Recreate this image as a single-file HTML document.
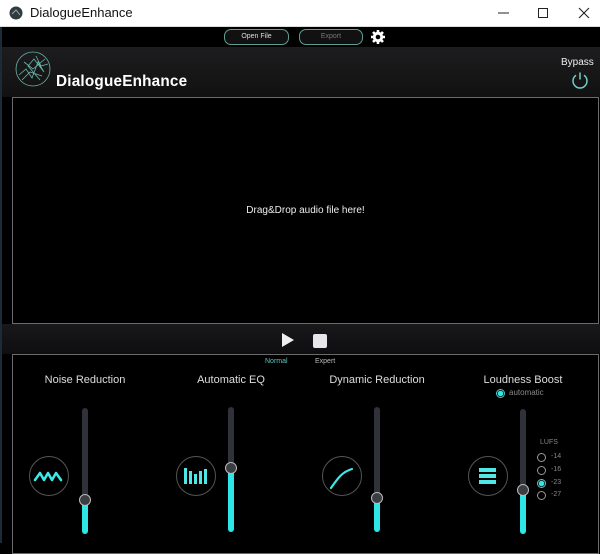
<!DOCTYPE html>
<html><head><meta charset="utf-8"><style>
*{margin:0;padding:0;box-sizing:border-box}
body{width:600px;height:543px;overflow:hidden;background:#000;font-family:"Liberation Sans",sans-serif;position:relative}
.abs{position:absolute}
#title{left:0;top:0;width:600px;height:27px;background:#fff;border-bottom:1px solid #ddd}
#title span{position:absolute;left:30px;top:5px;font-size:13px;color:#111}
#frame{left:0;top:27px;width:600px;height:516px;background:#000;border-left:2px solid #1c2a3a}
#hdr{left:2px;top:47px;width:598px;height:50px;background:linear-gradient(#1d1d1f,#111)}
.btn{position:absolute;top:29px;height:16px;border:1.5px solid #5e9e95;border-radius:7px;font-size:7px;text-align:center;line-height:13px;background:#111}
#drop{left:12px;top:97px;width:587px;height:227px;border:1px solid #6a6a6a;background:#000;color:#eee;font-size:10px;text-align:center;line-height:226px}
#trans{left:2px;top:324px;width:598px;height:30px;background:linear-gradient(#18181a,#0e0e10)}
#panel{left:12px;top:354px;width:587px;height:200px;border:1px solid #6a6a6a;background:#000}
.lab{position:absolute;color:#ddd;font-size:11px;text-align:center;width:140px}
.track{position:absolute;width:6px;border-radius:3px;background:#2f3238}
.fill{position:absolute;width:6px;border-radius:3px;background:#2ee6e6;bottom:0;left:0}
.knob{position:absolute;width:12px;height:12px;border-radius:50%;background:#3a3d42;border:1.5px solid #bbb;left:-3px}
.ic{position:absolute;width:40px;height:40px;border-radius:50%;border:1px solid #555}
.rad{position:absolute;width:9px;height:9px;border-radius:50%;border:1px solid #999}
.rl{position:absolute;font-size:7px;color:#888}
</style></head><body>
<div id="title" class="abs">
<svg class="abs" style="left:9px;top:6px" width="14" height="14"><circle cx="7" cy="7" r="6.5" fill="#2f3b3d"/><path d="M3 8 L7 4 L11 9" stroke="#9ab" fill="none" stroke-width="1"/></svg>
<span>DialogueEnhance</span>
<svg class="abs" style="left:490px;top:6px" width="104" height="14"><path d="M8 7h11" stroke="#222" stroke-width="1"/><rect x="48.5" y="2.5" width="9" height="9" fill="none" stroke="#222"/><path d="M89 2l10 10M99 2l-10 10" stroke="#222" stroke-width="1.1"/></svg>
</div>
<div id="frame" class="abs"></div>
<div class="btn" style="left:224px;width:65px;color:#ddd">Open File</div>
<div class="btn" style="left:299px;width:64px;color:#777">Export</div>
<svg class="abs" style="left:370px;top:29px" width="16" height="16" viewBox="0 0 16 16"><g fill="#fff"><circle cx="8" cy="8" r="5.2"/><g stroke="#fff" stroke-width="2.6"><path d="M8 1v14M1 8h14M3 3l10 10M13 3L3 13"/></g></g><circle cx="8" cy="8" r="2.3" fill="#000"/></svg>
<div id="hdr" class="abs"></div>
<svg class="abs" style="left:14px;top:50px" width="38" height="38" viewBox="0 0 38 38" fill="none" stroke="#6bb5ab" stroke-width="0.8"><circle cx="19" cy="19" r="17"/><path d="M5 25 L12 19 L18 28 L24 12 L30 22 L20 9 L14 16 L26 30 M8 30 L16 22 L28 26 M22 6 L27 16 L34 14 M10 12 L19 19 L31 9"/></svg>
<div class="abs" style="left:56px;top:73px;color:#fff;font-size:15.3px;font-weight:bold;letter-spacing:0.2px">DialogueEnhance</div>
<div class="abs" style="left:561px;top:57px;color:#eee;font-size:10px">Bypass</div>
<svg class="abs" style="left:570px;top:70px" width="20" height="20" viewBox="0 0 20 20" fill="none" stroke="#6ed0c6" stroke-width="1.5"><path d="M6 5.2A7 7 0 1 0 14 5.2"/><path d="M10 2.5v7"/></svg>
<div id="drop" class="abs">Drag&amp;Drop audio file here!</div>
<div id="trans" class="abs"></div>
<svg class="abs" style="left:281px;top:332px" width="14" height="16"><path d="M1 1L13 8L1 15Z" fill="#eee"/></svg>
<div class="abs" style="left:313px;top:334px;width:14px;height:14px;background:#e6e6ea;border-radius:2px"></div>
<div id="panel" class="abs"></div>
<div class="abs" style="left:265px;top:358px;font-size:7px;color:#5ec8c0">Normal</div>
<div class="abs" style="left:315px;top:358px;font-size:7px;color:#bbb">Expert</div>
<div class="lab" style="left:15px;top:374px">Noise Reduction</div>
<div class="lab" style="left:161px;top:374px">Automatic EQ</div>
<div class="lab" style="left:307px;top:374px">Dynamic Reduction</div>
<div class="lab" style="left:453px;top:374px">Loudness Boost</div>
<div class="rad" style="left:496px;top:389px;border-color:#5ec8c0;background:radial-gradient(#2ee6e6 2.5px,#000 3px)"></div>
<div class="abs" style="left:509px;top:388px;font-size:8px;color:#888">automatic</div>
<div class="track" style="left:82px;top:408px;height:126px"><div class="fill" style="height:34px"></div><div class="knob" style="top:86px"></div></div>
<div class="track" style="left:228px;top:407px;height:125px"><div class="fill" style="height:64px"></div><div class="knob" style="top:55px"></div></div>
<div class="track" style="left:374px;top:407px;height:125px"><div class="fill" style="height:33px"></div><div class="knob" style="top:85px"></div></div>
<div class="track" style="left:520px;top:409px;height:125px"><div class="fill" style="height:44px"></div><div class="knob" style="top:75px"></div></div>
<div class="ic" style="left:29px;top:456px"></div>
<svg class="abs" style="left:33px;top:466px" width="32" height="20" viewBox="0 0 32 20" fill="none" stroke="#3ee8e8" stroke-width="2.5" stroke-linecap="round" stroke-linejoin="round"><path d="M2 14 L7 7 L11 14 L15 7 L19 14 L23 7 L28 14"/></svg>
<div class="ic" style="left:176px;top:456px"></div>
<svg class="abs" style="left:184px;top:466px" width="24" height="20" fill="#4ee6e6"><rect x="0" y="2" width="3" height="16"/><rect x="5" y="5" width="3" height="13"/><rect x="10" y="8" width="3" height="10"/><rect x="15" y="5" width="3" height="13"/><rect x="20" y="3" width="3" height="15"/></svg>
<div class="ic" style="left:322px;top:456px"></div>
<svg class="abs" style="left:328px;top:462px" width="30" height="28" fill="none" stroke="#3ee8e8" stroke-width="2.2" stroke-linecap="round"><path d="M3 26 C10 16 14 10 24 7"/></svg>
<div class="ic" style="left:468px;top:456px"></div>
<svg class="abs" style="left:478px;top:466px" width="20" height="20" fill="#4ee6e6"><rect x="1" y="2" width="17" height="4"/><rect x="1" y="8" width="17" height="4"/><rect x="1" y="14" width="17" height="4"/></svg>
<div class="abs" style="left:540px;top:439px;font-size:7px;color:#888">LUFS</div>
<div class="rad" style="left:537px;top:453px"></div><div class="rl" style="left:551px;top:453px">-14</div>
<div class="rad" style="left:537px;top:466px"></div><div class="rl" style="left:551px;top:466px">-16</div>
<div class="rad" style="left:537px;top:479px;border-color:#5ec8c0;background:radial-gradient(#2ee6e6 2.5px,#000 3px)"></div><div class="rl" style="left:551px;top:479px">-23</div>
<div class="rad" style="left:537px;top:491px"></div><div class="rl" style="left:551px;top:491px">-27</div>
</body></html>
